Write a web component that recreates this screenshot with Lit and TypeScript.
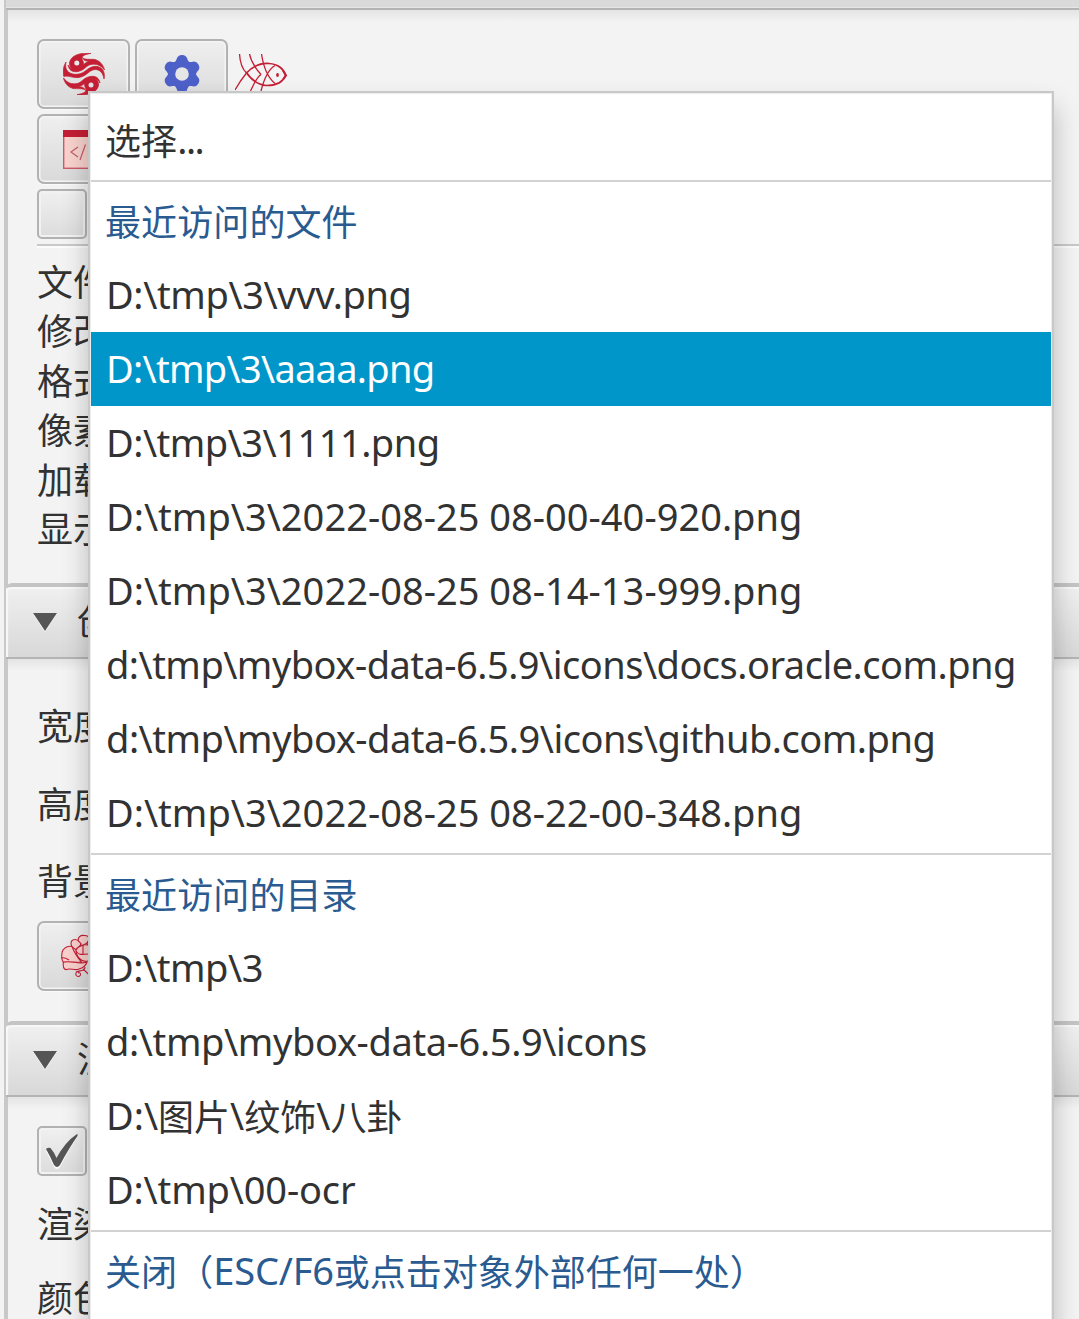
import { LitElement, html, css, svg } from "lit";
import { customElement } from "lit/decorators.js";
import { classMap } from "lit/directives/class-map.js";

type Row = { text?: string; kind: "item" | "head" | "line"; active?: boolean; track?: number };

const ROWS: Row[] = [
  { kind: "item", text: "选择...", track: -1.5 },
  { kind: "line" },
  { kind: "head", text: "最近访问的文件" },
  { kind: "item", text: "D:\\tmp\\3\\vvv.png", track: -0.37 },
  { kind: "item", text: "D:\\tmp\\3\\aaaa.png", active: true, track: -0.7 },
  { kind: "item", text: "D:\\tmp\\3\\1111.png", track: -0.5 },
  { kind: "item", text: "D:\\tmp\\3\\2022-08-25 08-00-40-920.png", track: 0.02 },
  { kind: "item", text: "D:\\tmp\\3\\2022-08-25 08-14-13-999.png", track: 0.02 },
  { kind: "item", text: "d:\\tmp\\mybox-data-6.5.9\\icons\\docs.oracle.com.png", track: -0.51 },
  { kind: "item", text: "d:\\tmp\\mybox-data-6.5.9\\icons\\github.com.png", track: -0.48 },
  { kind: "item", text: "D:\\tmp\\3\\2022-08-25 08-22-00-348.png", track: 0.02 },
  { kind: "line" },
  { kind: "head", text: "最近访问的目录" },
  { kind: "item", text: "D:\\tmp\\3", track: -0.45 },
  { kind: "item", text: "d:\\tmp\\mybox-data-6.5.9\\icons", track: -0.37 },
  { kind: "item", text: "D:\\图片\\纹饰\\八卦", track: 0 },
  { kind: "item", text: "D:\\tmp\\00-ocr", track: -0.15 },
  { kind: "line" },
  { kind: "head", text: "关闭（ESC/F6或点击对象外部任何一处）", track: -0.2 },
];

const INFO = ["文件", "修改", "格式", "像素", "加载", "显示"];

const swirl = svg`<svg width="42" height="42" viewBox="0 0 42 42" fill="#c41e35" stroke="#c41e35" stroke-width=".7">
  <path d="M28 .4C18-.8 8 2 6.500 9.500C6 14 9 17 13 16.500C17 16 20 14 20.500 11C20.800 8 18.500 6.500 19 4.500C20 2 24 1 28 .4Z"/>
  <path d="M19.500 4.500C21 7 27 6 32 6.500C37 8 40.500 12 41.500 17C38 12 33 10.500 28 11.500C23 12.500 22 17 15 18.500C9 19.500 6 17 5 12C6.500 15 10 17 14 16C20 14.500 20 9.500 27 8.300C23 8.500 20.500 7.500 19.500 4.500Z"/>
  <path d="M3 9C0 14-.5 19 .8 23.500C5 22 10 25.500 16 24.500C24 23 26 17 32 16.500C37 16.500 40 20 41 26C42 22 41 17 38 15C33 11.500 27 14 23 17.500C18 21.500 12 22.500 7 20C3 18 2 14 3 9Z"/>
  <path d="M14 41.600C24 43 34 40 35.500 32.500C36 28 33 25 29 25.500C25 26 22 28 21.500 31C21.200 34 23.500 35.500 23 37.500C22 40 18 41 14 41.600Z"/>
  <path d="M22.500 37.500C21 35 15 36 10 35.500C5 34 1.500 30 .5 25C4 30 9 31.500 14 30.500C19 29.500 20 25 27 23.500C33 22.500 36 25 37 30C35.500 27 32 25 28 26C22 27.500 22 32.500 15 33.700C19 33.500 21.500 34.500 22.500 37.500Z"/>
  <g stroke="none"><circle cx="13.800" cy="10" r="2.500" fill="#eaeaea"/><circle cx="28" cy="32" r="2.500" fill="#e0e0e0"/></g>
</svg>`;

const gear = svg`<svg width="38" height="38" viewBox="-19 -19 38 38">
  <g fill="#4d60c8"><circle r="14"/>
  ${[0, 60, 120, 180, 240, 300].map((a) => svg`<path transform="rotate(${a})" d="M-8-10L-5.500-14.500Q-4.500-19 0-19Q4.500-19 5.500-14.500L8-10Z"/>`)}</g>
  <circle r="6.800" fill="#e6e6e6"/>
</svg>`;

const fish = svg`<svg width="54" height="42" viewBox="0 0 54 42" fill="none" stroke="#c41e35" stroke-width="1.300">
  <path stroke-width="1.700" d="M11.500 19C18 12 26 9 34 9.500C43 10 49 15 50.500 21.500C48 28 41 31.500 32 31.500C23 31 17 27 11 18"/>
  <path d="M4.500 0C5 9 8 16 12 19.500M11.500 19Q5 27 0 36M14.500 0C16 8 22 16 26 20.500M26 20.500C21 24 19 30 15.500 37M26.500 0C28 10 32 23 40 29.500M40 11.500C34 15 29 25 26 37"/>
  <ellipse cx="42.500" cy="21" rx="1.400" ry="2" fill="#c41e35" stroke="none"/>
  <path d="M48 16.500L51 21.500L48 25.500" stroke-width="2"/>
</svg>`;

const code = svg`<svg width="41" height="40" viewBox="0 0 41 40">
  <rect x=".7" y=".7" width="39.600" height="37.600" fill="#f8d2cc" stroke="#d0586a" stroke-width="1.400"/>
  <path d="M0 0H41V7H0Z" fill="#c41e35"/>
  <path d="M15 17L8 22L15 27M22.500 14.500L17 30M26 17L33 22L26 27" fill="none" stroke="#c35a6c" stroke-width="1.200"/>
</svg>`;

const peony = svg`<svg width="44" height="44" viewBox="0 0 44 44" fill="#f8d0cc" stroke="#c41e35" stroke-width="1.100" stroke-linejoin="round">
  <path d="M14 13C17 5 24 3 30 5C40 8 44 18 39 27C32 33 18 32 12 26Z" stroke="none"/>
  <path d="M17.500 8C16 3 20 1 23 1.500C29 1 29 6 26 9L21 12Z"/>
  <path d="M26 9C29 5 36 7 36 13C42 14 43 22 38 25L30 20Z"/>
  <path d="M11 13C9 9 10 5.500 14 5.500C17 5 18 8 20 9.500L17 17Z"/>
  <path d="M2.300 28C-.5 25 1 17 2 16C4 13 8 11.500 11 12.500C13 18 17 24 20.700 28.300Z"/>
  <path d="M2.300 28.300C2 31 2 35 5 35.700C9 33.500 14 37 18 35C22 34 25 31 26 28C18 31 10 26 2.300 28.300Z"/>
  <path d="M15 16C17 12 24 9 29 12C33 15 32 26 27 27C20 29 15 22 15 16Z"/>
  <path fill="none" d="M0 24C3 23 5 24 8 26M15 17C18 22 22 20 28 20M22 11L22 20"/>
  <path fill="none" d="M24 33C24 38 18 36 15.500 38C13 42 18 44 19.500 41C20 39 18 38 17 39M22 35C25 38 27 39 28 41M27 34L35 38"/>
</svg>`;

const tick = svg`<svg width="34" height="37" viewBox="0 0 34 37">
  <path d="M1 17L5.500 15Q9 19 11.500 25Q20 9 32 1Q33 1 32.500 3Q24 15 15 33Q12 37 9 33Q5 24 1 17Z" fill="#fff" transform="translate(0 1)"/>
  <path d="M1 16Q3 14 5.500 15Q9 19 11.500 25Q20 9 32 1Q33 1 32.500 3Q24 15 15 32Q12 36 9 32Q5 23 1 16Z" fill="#555"/>
</svg>`;

@customElement("recent-menu")
class RecentMenu extends LitElement {
  static styles = css`
    :host { display: flex; flex-direction: column; box-sizing: border-box; padding: 10px 1px 0;
      background: #fff; border: 2px solid #c8c8c8; border-bottom: 0; box-shadow: inset 0 0 0 1px #ededed, 0 16px 24px rgba(0,0,0,.24); }
    .row { box-sizing: border-box; height: 74px; flex: none; display: flex; align-items: center; padding: 0 0 2px 15px;
      font-size: 38px; line-height: 72px; color: #323232; white-space: pre; }
    .row.active { background: #0096c9; color: #fff; }
    .row.head { color: #295a90; }
    .han { font-size: 36px; letter-spacing: 0; line-height: 66px; padding-top: 6px; }
    .han:first-child { margin-left: -1px; letter-spacing: .1px; }
    .line { height: 7px; flex: none; display: flex; align-items: center; }
    .rule { height: 2px; flex: 1; background: #d2d2d2; }
  `;
  runs(r: Row) {
    return (r.text!.match(/[\u3000-\uffef]+|[^\u3000-\uffef]+/g) ?? []).map((t) =>
      /[\u3000-\uffef]/.test(t)
        ? html`<span class="han">${t}</span>`
        : html`<span style="letter-spacing:${r.track ?? 0}px">${t}</span>`);
  }
  render() {
    return ROWS.map((r) =>
      r.kind === "line"
        ? html`<div class="line"><div class="rule"></div></div>`
        : html`<div class=${classMap({ row: true, head: r.kind === "head", active: !!r.active })}>${this.runs(r)}</div>`);
  }
}

@customElement("app-root")
class AppRoot extends LitElement {
  static styles = css`
    :host { display: block; position: relative; width: 1079px; height: 1319px; overflow: hidden;
      background: #f3f3f3; color: #323232; font-family: "Noto Sans", "Noto Sans CJK SC", sans-serif; font-size: 36px; }
    .panes { box-sizing: border-box; margin-left: 4px; border-left: 4px solid #c8c8c8; height: 1319px; display: flex; flex-direction: column; }
    .title { box-sizing: border-box; flex: none; display: flex; align-items: center; gap: 20px; height: 76px;
      padding-left: 25px; margin-left: -2px; border-top: 4px solid #c4c4c4; border-bottom: 2px solid #b4b4b4; border-radius: 6px 0 0 0;
      background: linear-gradient(#f0f0f0, #d8d8d8); box-shadow: inset 2px 2px 1px #f8f8f8; }
    .title span { line-height: 50px; }
    .top { height: 10px; border-top: 0; border-radius: 0; background: #dadada; box-shadow: inset 0 -1px #e6e6e6; }
    .arrow { border: 12px solid transparent; border-top: 18px solid #555; border-bottom: 0; filter: drop-shadow(0 1px 0 #fff); margin-left: 2px; }
    .body { box-sizing: border-box; flex: none; display: flex; flex-direction: column; align-items: flex-start;
      padding-left: 29px; background: linear-gradient(#e4e4e4, #f3f3f3 12px); }
    .b1 { height: 573px; padding-top: 29px; gap: 5px; }
    .b2 { height: 362px; padding-top: 29px; }
    .b3 { height: 222px; padding-top: 29px; }
    .tools { display: flex; gap: 5px; }
    .btn { box-sizing: border-box; flex: none; width: 93px; height: 70px; display: flex; align-items: center; justify-content: center;
      border: 2px solid #b2b2b2; border-radius: 7px; background: linear-gradient(#efefef, #d9d9d9); box-shadow: inset 0 0 0 1.5px #f4f4f4, 0 1px #fafafa; }
    .box { box-sizing: border-box; flex: none; width: 50px; height: 50px; display: flex; align-items: center; justify-content: center;
      border: 2px solid #b2b2b2; border-radius: 5px; background: linear-gradient(#f0f0f0, #dcdcdc); box-shadow: inset 0 0 0 2px #f2f2f2; }
    .file { padding-top: 2px; }
    .fish { padding: 15px 0 0 2px; }
    .sep { align-self: stretch; height: 2px; background: #c8c8c8; box-shadow: 0 2px #fbfbfb; }
    .info { display: flex; flex-direction: column; margin-top: 7px; line-height: 49.4px; }
    .field { height: 77.700px; line-height: 77.700px; }
    .btn.flower { padding-right: 2px; }
    .opt { flex: none; height: 74px; line-height: 74px; }
    .first { margin-top: 12px; }
    .menu { position: absolute; left: 88px; top: 91px; width: 966px; height: 1260px; }
  `;
  render() {
    return html`
      <div class="panes">
        <div class="title top"></div>
        <div class="body b1">
          <div class="tools"><div class="btn">${swirl}</div><div class="btn">${gear}</div><div class="fish">${fish}</div></div>
          <div class="btn file">${code}</div>
          <div class="box"></div>
          <div class="sep"></div>
          <div class="info">${INFO.map((t) => html`<div>${t}</div>`)}</div>
        </div>
        <div class="title"><i class="arrow"></i><span>创</span></div>
        <div class="body b2">
          <div class="field">宽度</div><div class="field">高度</div><div class="field">背景</div>
          <div class="btn flower">${peony}</div>
        </div>
        <div class="title"><i class="arrow"></i><span>渲</span></div>
        <div class="body b3">
          <div class="box">${tick}</div>
          <div class="opt first">渲染</div><div class="opt">颜色</div>
        </div>
      </div>
      <recent-menu class="menu"></recent-menu>`;
  }
}
